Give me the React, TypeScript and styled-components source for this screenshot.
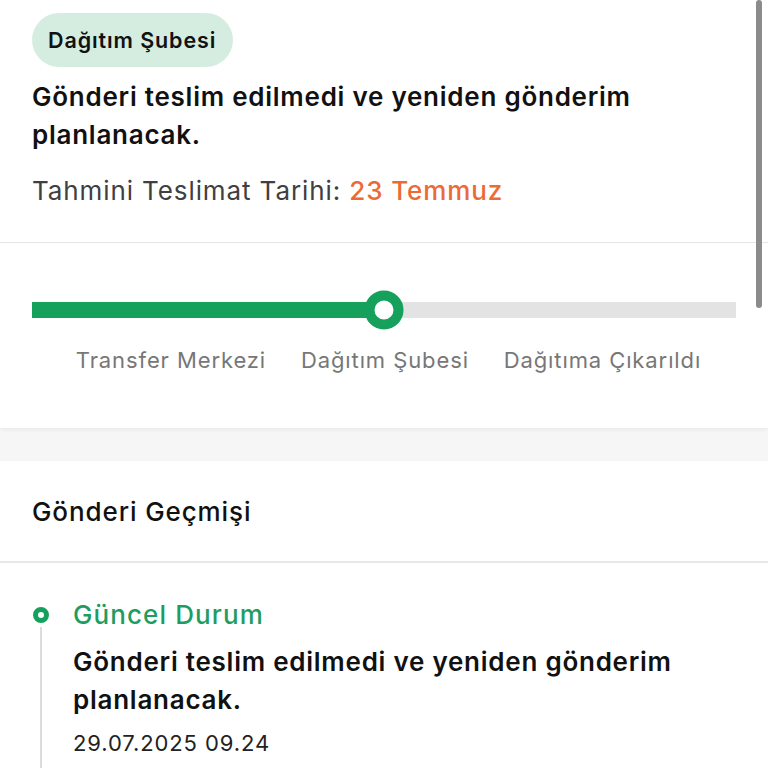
import * as React from "react";
import styled, { createGlobalStyle } from "styled-components";

const GREEN = "#15a05b";

const GlobalStyle = createGlobalStyle`
  html, body {
    margin: 0;
    padding: 0;
    background: #f6f6f6;
    font-family: Inter, "Noto Sans", "Liberation Sans", sans-serif;
    color: #111;
  }
  * {
    box-sizing: border-box;
  }
`;

const Page = styled.main`
  position: relative;
  width: 768px;
  min-height: 768px;
  overflow: hidden;
`;

const ScrollThumb = styled.div`
  position: absolute;
  top: 0;
  right: 6px;
  width: 6px;
  height: 308px;
  border-radius: 3px;
  background: #8b8b8b;
`;

const Card = styled.section`
  background: #fff;
  box-shadow: 0 2px 4px rgba(0, 0, 0, 0.05);
`;

const StatusBlock = styled.div`
  padding: 13px 32px 34px;
  border-bottom: 1px solid #e6e6e6;
`;

const Badge = styled.span`
  display: inline-block;
  padding: 13px 17px 13px 16px;
  border-radius: 27px;
  background: #d5ede1;
  font-size: 21.5px;
  font-weight: 600;
  letter-spacing: 0.9px;
  line-height: 28px;
  color: #111;
`;

const StatusTitle = styled.h1`
  margin: 11px 0 0;
  font-size: 26px;
  font-weight: 600;
  letter-spacing: 0.75px;
  line-height: 38px;
  color: #111;
  max-width: 660px;
`;

const Estimate = styled.p`
  margin: 20px 0 0;
  font-size: 26px;
  font-weight: 400;
  letter-spacing: 0.9px;
  line-height: 34px;
  color: #404040;
`;

const EstimateDate = styled.span`
  color: #ec6a35;
  font-weight: 500;
`;

const ProgressBlock = styled.div`
  padding: 59px 32px 53px;
`;

const Track = styled.div`
  position: relative;
  height: 16px;
  background: #e3e3e3;
`;

const Fill = styled.div`
  height: 100%;
  background: ${GREEN};
`;

const Knob = styled.div`
  position: absolute;
  top: 50%;
  width: 39px;
  height: 39px;
  border-radius: 50%;
  background: #fff;
  border: 10px solid ${GREEN};
  transform: translate(-50%, -50%);
`;

const Steps = styled.div`
  display: flex;
  justify-content: space-evenly;
  margin-top: 27px;
  padding-left: 9px;
`;

const StepLabel = styled.span`
  font-size: 22px;
  letter-spacing: 0.9px;
  line-height: 30px;
  color: #777;
`;

const Gap = styled.div`
  height: 33px;
`;

const HistoryHeader = styled.h2`
  margin: 0;
  padding: 34px 32px 0;
  height: 102px;
  font-size: 26px;
  font-weight: 500;
  letter-spacing: 0.9px;
  line-height: 34px;
  color: #111;
  border-bottom: 2px solid #e8e8e8;
`;

const Timeline = styled.ul`
  list-style: none;
  margin: 0;
  padding: 35px 32px 0;
`;

const Event = styled.li`
  display: grid;
  grid-template-columns: 41px 1fr;
`;

const Rail = styled.div`
  display: flex;
  flex-direction: column;
  align-items: center;
  width: 17px;
  padding-top: 9px;
`;

const Dot = styled.span`
  width: 16px;
  height: 16px;
  border-radius: 50%;
  border: 5px solid ${GREEN};
  background: #fff;
`;

const RailLine = styled.span`
  flex: 1;
  width: 2px;
  margin-top: 4px;
  background: #dcdcdc;
`;

const EventBody = styled.div`
  display: flex;
  flex-direction: column;
  padding-bottom: 20px;
`;

const EventTitle = styled.div`
  font-size: 26px;
  font-weight: 500;
  letter-spacing: 1.1px;
  line-height: 34px;
  color: #1f9d5f;
`;

const EventText = styled.div`
  margin-top: 11px;
  font-size: 26px;
  font-weight: 600;
  letter-spacing: 0.75px;
  line-height: 38px;
  color: #111;
`;

const EventDate = styled.div`
  margin-top: 9px;
  font-size: 22px;
  letter-spacing: 0.9px;
  line-height: 30px;
  color: #222;
`;

const steps = ["Transfer Merkezi", "Dağıtım Şubesi", "Dağıtıma Çıkarıldı"];

const App = () => {
  const progress = 50;

  return (
    <Page>
      <GlobalStyle />
      <Card>
        <StatusBlock>
          <Badge>Dağıtım Şubesi</Badge>
          <StatusTitle>
            Gönderi teslim edilmedi ve yeniden gönderim planlanacak.
          </StatusTitle>
          <Estimate>
            Tahmini Teslimat Tarihi: <EstimateDate>23 Temmuz</EstimateDate>
          </Estimate>
        </StatusBlock>
        <ProgressBlock>
          <Track>
            <Fill style={{ width: `${progress}%` }} />
            <Knob style={{ left: `${progress}%` }} />
          </Track>
          <Steps>
            {steps.map((step) => (
              <StepLabel key={step}>{step}</StepLabel>
            ))}
          </Steps>
        </ProgressBlock>
      </Card>
      <Gap />
      <Card>
        <HistoryHeader>Gönderi Geçmişi</HistoryHeader>
        <Timeline>
          <Event>
            <Rail>
              <Dot />
              <RailLine />
            </Rail>
            <EventBody>
              <EventTitle>Güncel Durum</EventTitle>
              <EventText>
                Gönderi teslim edilmedi ve yeniden gönderim planlanacak.
              </EventText>
              <EventDate>29.07.2025 09.24</EventDate>
            </EventBody>
          </Event>
        </Timeline>
      </Card>
      <ScrollThumb />
    </Page>
  );
};

export default App;
